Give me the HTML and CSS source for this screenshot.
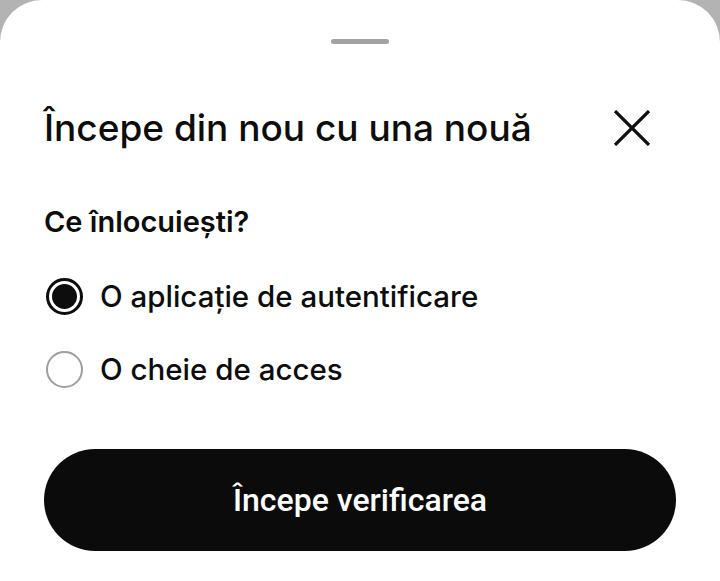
FILE: index.html
```html
<!DOCTYPE html>
<html lang="ro">
<head>
<meta charset="utf-8">
<title>Începe din nou</title>
<link rel="stylesheet" href="styles.css">
</head>
<body>
<div class="sheet">
  <div class="handle"></div>
  <div class="header">
    <h1 class="title">Începe din nou cu una nouă</h1>
    <button class="close" aria-label="Închide">
      <svg width="38" height="36" viewBox="0 0 38 36"><path d="M2 1 L36 35 M36 1 L2 35" stroke="#111" stroke-width="3.2" stroke-linecap="butt" fill="none"/></svg>
    </button>
  </div>
  <p class="question">Ce înlocuiești?</p>
  <div class="options">
    <label class="option"><span class="radio checked"><span class="dot"></span></span><span class="label">O aplicație de autentificare</span></label>
    <label class="option"><span class="radio"></span><span class="label">O cheie de acces</span></label>
  </div>
  <button class="primary">Începe verificarea</button>
</div>
</body>
</html>
```
FILE: styles.css
```css
html, body {
  margin: 0;
  padding: 0;
  background: #b3b3b3;
  height: 100%;
}
body {
  font-family: Inter, "Noto Sans", sans-serif;
  color: #0d0d0d;
  overflow: hidden;
}
.sheet {
  background: #fff;
  border-radius: 42px 42px 0 0;
  height: 581px;
  display: flex;
  flex-direction: column;
  padding: 0 44px;
  box-sizing: border-box;
}
.handle {
  align-self: center;
  width: 58px;
  height: 5px;
  border-radius: 3px;
  background: #a3a3a3;
  margin-top: 39px;
}
.header {
  display: flex;
  align-items: center;
  justify-content: space-between;
  margin-top: 62px;
}
.title {
  margin: 0;
  font-size: 37px;
  font-weight: 500;
  line-height: 44px;
}
.close {
  border: 0;
  background: none;
  padding: 0;
  margin-right: 25px;
  display: flex;
}
.question {
  margin: 54px 0 0;
  font-size: 29px;
  font-weight: 600;
  line-height: 36px;
}
.options {
  display: flex;
  flex-direction: column;
  gap: 35px;
  margin-top: 37px;
}
.option {
  display: flex;
  align-items: center;
  gap: 17px;
  padding-left: 2px;
}
.radio {
  width: 37px;
  height: 37px;
  border-radius: 50%;
  box-sizing: border-box;
  border: 2px solid #9e9e9e;
  display: flex;
  align-items: center;
  justify-content: center;
}
.radio.checked {
  border: 3px solid #0d0d0d;
}
.dot {
  width: 25px;
  height: 25px;
  border-radius: 50%;
  background: #0d0d0d;
}
.label {
  font-size: 29.5px;
  font-weight: 500;
  line-height: 38px;
}
.primary {
  margin-top: 61px;
  height: 102px;
  border: 0;
  border-radius: 51px;
  background: #0b0b0b;
  color: #fff;
  font-family: Roboto, Inter, sans-serif;
  font-size: 32px;
  font-weight: 500;
}
```
